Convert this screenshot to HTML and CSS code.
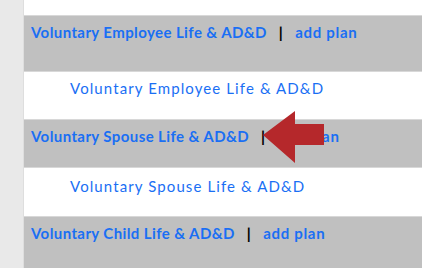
FILE: index.html
```html
<!DOCTYPE html>
<html lang="en">
<head>
  <meta charset="UTF-8">
  <title>Plans</title>
  <link rel="stylesheet" href="styles.css">
</head>
<body>
  <div class="sidebar"></div>
  <div class="content">
    <div class="spacer"></div>
    <div class="plan-head plan-head--first">
      <a class="plan-title" href="#">Voluntary Employee Life &amp; AD&amp;D</a>
      <span class="sep">|</span>
      <a class="plan-add" href="#">add plan</a>
    </div>
    <div class="plan-row">
      <a class="plan-link" href="#">Voluntary Employee Life &amp; AD&amp;D</a>
    </div>
    <div class="plan-head">
      <a class="plan-title" href="#">Voluntary Spouse Life &amp; AD&amp;D</a>
      <span class="sep">|</span>
      <a class="plan-add" href="#">add plan</a>
    </div>
    <div class="plan-row plan-row--tall">
      <a class="plan-link" href="#">Voluntary Spouse Life &amp; AD&amp;D</a>
    </div>
    <div class="plan-head plan-head--last">
      <a class="plan-title" href="#">Voluntary Child Life &amp; AD&amp;D</a>
      <span class="sep">|</span>
      <a class="plan-add" href="#">add plan</a>
    </div>
  </div>
  <svg class="pointer" width="64" height="56" viewBox="0 0 64 56">
    <polygon points="1,25 33,1 33,14 62,14 62,35 33,35 33,53" fill="#b5282b"/>
  </svg>
</body>
</html>
```

FILE: styles.css
```css
body {
  margin: 0;
  display: flex;
  height: 268px;
  overflow: hidden;
  font-family: "Lato", "Open Sans", sans-serif;
  background: #fff;
}

.sidebar {
  width: 23px;
  background: #e9e9e9;
  border-right: 1px solid #dedede;
}

.content {
  flex: 1;
  display: flex;
  flex-direction: column;
}

.spacer {
  height: 15px;
}

.plan-head {
  box-sizing: border-box;
  height: 49px;
  padding: 6px 0 0 7px;
  background: #c0c0c0;
  border-top: 1px solid #d8d8d8;
  border-bottom: 1px solid #d8d8d8;
  display: flex;
  align-items: flex-start;
  font-size: 15px;
  line-height: 20px;
  font-weight: bold;
  letter-spacing: 0.4px;
  white-space: nowrap;
}

.plan-head--first {
  height: 57px;
}

.plan-head--last {
  flex: 1;
  border-bottom: 0;
}

.plan-title,
.plan-add,
.plan-link {
  color: #1a6ff4;
  text-decoration: none;
}

.plan-add {
  letter-spacing: 0.7px;
}

.sep {
  color: #000;
  font-weight: 900;
  margin: 0 12px 0 12px;
}

.plan-row {
  box-sizing: border-box;
  height: 47px;
  padding: 6px 0 0 46px;
  font-size: 15px;
  line-height: 20px;
  letter-spacing: 1.1px;
  white-space: nowrap;
}

.plan-row--tall {
  height: 48px;
  padding-top: 8px;
}

.pointer {
  position: absolute;
  left: 262px;
  top: 110px;
}
```
